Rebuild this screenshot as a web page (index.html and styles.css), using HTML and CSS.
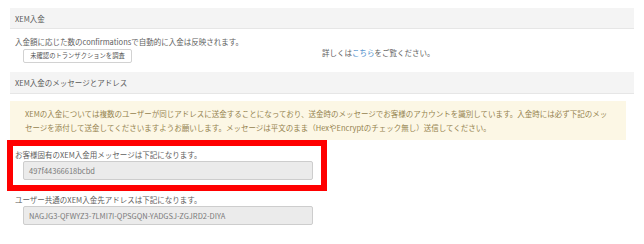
FILE: index.html
```html
<!DOCTYPE html>
<html lang="ja">
<head>
<meta charset="utf-8">
<title>XEM入金</title>
<link rel="stylesheet" href="styles.css">
</head>
<body>
<div class="page">
  <div class="panel-heading">XEM入金</div>
  <div class="deposit-row">
    <div class="col-left">
      <p class="desc">入金額に応じた数のconfirmationsで自動的に入金は反映されます。</p>
      <button class="btn" type="button">未確認のトランザクションを調査</button>
    </div>
    <div class="col-right">詳しくは<a class="link" href="#">こちら</a>をご覧ください。</div>
  </div>
  <div class="panel-heading second">XEM入金のメッセージとアドレス</div>
  <div class="section">
    <div class="alert">XEMの入金については複数のユーザーが同じアドレスに送金することになっており、送金時のメッセージでお客様のアカウントを識別しています。入金時には必ず下記のメッセージを添付して送金してくださいますようお願いします。メッセージは平文のまま（HexやEncryptのチェック無し）送信してください。</div>
    <div class="field highlight">
      <label class="field-label">お客様固有のXEM入金用メッセージは下記になります。</label>
      <div class="input">497f44366618bcbd</div>
    </div>
    <div class="field">
      <label class="field-label">ユーザー共通のXEM入金先アドレスは下記になります。</label>
      <div class="input">NAGJG3-QFWYZ3-7LMI7I-QPSGQN-YADGSJ-ZGJRD2-DIYA</div>
    </div>
  </div>
</div>
</body>
</html>
```

FILE: styles.css
```css
*, *::before, *::after { box-sizing: border-box; }
html, body { margin: 0; padding: 0; background: #fff; }
body {
  font-family: "Noto Sans CJK JP", "Noto Sans", sans-serif;
  font-size: 7.5px;
  color: #606060;
  width: 644px;
  height: 244px;
  overflow: hidden;
}
.page { padding: 8px 10px 0 10px; }
.panel-heading {
  width: 624px;
  height: 21px;
  line-height: 21px;
  padding-left: 5px;
  background: #f4f4f4;
  border-bottom: 1px solid #e6e6e6;
  color: #5a5a5a;
}
.panel-heading.second { height: 22px; line-height: 22px; }
.deposit-row {
  display: grid;
  grid-template-columns: 312px 1fr;
  padding: 7px 0 9px 0;
}
.desc { margin: 0 0 1px 5px; line-height: 12px; }
.btn {
  display: block;
  margin-left: 13px;
  height: 14px;
  width: 109px;
  padding: 0;
  border: 1px solid #d2d2d2;
  border-radius: 2px;
  background: #fff;
  font-family: inherit;
  font-size: 6.3px;
  color: #555;
  line-height: 12px;
}
.col-right { padding-top: 11px; line-height: 12px; }
.link { color: #4f8fcc; text-decoration: none; }
.section { padding-top: 7px; }
.alert {
  width: 616px;
  height: 39px;
  background: #fcf7e5;
  color: #95834f;
  line-height: 14px;
  padding: 6px 12px 5px 15px;
}
.field { position: relative; width: 616px; }
.field.highlight { margin-top: 9px; }
.field + .field { margin-top: 14px; }
.field-label { display: block; padding-left: 5px; line-height: 12px; }
.input {
  margin-left: 13px;
  width: 290px;
  height: 19px;
  line-height: 17px;
  padding-left: 5px;
  background: #ebebeb;
  border: 1px solid #cdcdcd;
  border-radius: 2px;
  color: #7a7a7a;
}
.highlight::after {
  content: "";
  position: absolute;
  left: -3px;
  top: -9px;
  width: 320px;
  height: 51px;
  border: 6px solid #f00;
  pointer-events: none;
}
```
